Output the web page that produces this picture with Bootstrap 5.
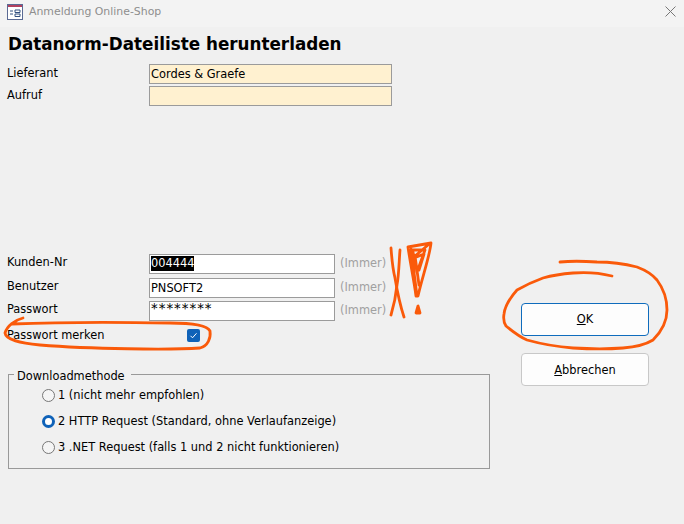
<!DOCTYPE html>
<html lang="de">
<head>
<meta charset="utf-8">
<title>Anmeldung Online-Shop</title>
<link href="https://cdn.jsdelivr.net/npm/bootstrap@5.3.0/dist/css/bootstrap.min.css" rel="stylesheet">
<style>
html,body{height:524px;overflow:hidden}
body{background:#f0f0f0;color:#000;font-family:"DejaVu Sans","Noto Sans",sans-serif;font-size:11.4px;line-height:16px}
.win-shell{position:relative;width:684px;height:524px}
.win-title{height:27px;padding:0 0 3px 7px;background:#f3f3f3;color:#8e8e8e;gap:6px;font-size:10.9px}
.win-close{margin-left:auto;margin-right:8px;margin-top:-2px}
.dlg-head{font-size:16.8px;font-weight:700;line-height:22px;padding:6px 0 0 8px;margin:0;height:37px}
.dlg-main{padding-left:7px}
.left-pane{width:483px}
.fld-row{height:20px;margin-bottom:2px}
.fld-row.gap4{margin-bottom:4px}
.fld-row.gap3{margin-bottom:3px}
.fld-label{width:142px;flex:none;margin-top:1px}
.fld-label.lower{margin-top:0}
.fld-input{height:20px;border:1px solid #9b9b9b;border-radius:0;padding:0 1px;font:inherit;color:#000;outline:0;background:#fff;min-height:0;box-shadow:none}
.fld-wide{width:243px;background:#fff1d0}
.fld-narrow{width:186px}
.fld-hint{color:#a0a0a0;margin-left:5px;line-height:19px}
.sel-text{background:#000;color:#fff;display:inline-block;line-height:15px}
.pw-dots{font-size:13.4px;letter-spacing:1px;line-height:14px;overflow:hidden}
.spacer-a{height:146px}
.check-row{height:20px;margin-top:4px}
.check-label{width:180px;flex:none}
.check-box{width:13px;height:13px;border-radius:2px;background:#0f62b8}
.group-frame{margin:29px 0 0 1px;width:482px;height:95px;border:1px solid #999;position:relative;padding:7px 0 0 33px}
.group-legend{position:absolute;left:5px;top:-7px;background:#f0f0f0;padding:0 6px 0 3px}
.radio-line{height:26px;gap:3px}
.radio-mark{appearance:none;width:13px;height:13px;border:1px solid #777;border-radius:50%;background:#f5f5f5;margin:0;flex:none}
.radio-mark:checked{border:3.5px solid #0f62b8;background:#fff}
.right-pane{width:128px;margin-left:31px;padding-top:239px}
.dlg-btn{width:128px;height:33px;background:#fdfdfd;border:1px solid #c8c8c8;border-radius:4px;color:#000;font-size:11.4px;padding:0;display:block;margin-bottom:17px}
.dlg-btn.is-default{border-color:#0f6cbd;padding-bottom:2px}
.scribble{position:absolute;left:0;top:0;pointer-events:none}
.scribble path{fill:none;stroke:#fa5a0a;stroke-linecap:round;stroke-linejoin:round;stroke-width:2.8}
</style>
</head>
<body>
<div class="win-shell">
  <div class="win-title d-flex align-items-center">
    <svg width="16" height="16" viewBox="0 0 16 16"><rect x=".5" y=".5" width="15" height="15" fill="#fff" stroke="#5a6a94"/><rect x="1" y="1" width="14" height="2" fill="#b2415f"/><path d="M3 7h3M3 10h3M8 6h5v2.500H8zM8 10h5v2.500H8z" fill="none" stroke="#33507f"/></svg>
    <span>Anmeldung Online-Shop</span>
    <svg class="win-close" width="11" height="11" viewBox="0 0 11 11"><path d="M.5.5l10 10M10.500.5l-10 10" stroke="#777" fill="none"/></svg>
  </div>
  <h1 class="dlg-head">Datanorm-Dateiliste herunterladen</h1>
  <div class="dlg-main d-flex">
    <div class="left-pane">
      <div class="fld-row d-flex"><div class="fld-label">Lieferant</div><input class="fld-input fld-wide" value="Cordes &amp; Graefe"></div>
      <div class="fld-row d-flex"><div class="fld-label">Aufruf</div><input class="fld-input fld-wide" value=""></div>
      <div class="spacer-a"></div>
      <div class="fld-row gap4 d-flex"><div class="fld-label lower">Kunden-Nr</div><div class="fld-input fld-narrow"><span class="sel-text">004444</span></div><span class="fld-hint">(Immer)</span></div>
      <div class="fld-row gap3 d-flex"><div class="fld-label lower">Benutzer</div><input class="fld-input fld-narrow" value="PNSOFT2"><span class="fld-hint">(Immer)</span></div>
      <div class="fld-row d-flex"><div class="fld-label lower">Passwort</div><div class="fld-input fld-narrow pw-dots">********</div><span class="fld-hint">(Immer)</span></div>
      <div class="check-row d-flex align-items-center">
        <span class="check-label">Passwort merken</span>
        <span class="check-box d-flex align-items-center justify-content-center"><svg width="9" height="9" viewBox="0 0 9 9"><path d="M1.500 4.800l2 2 4-4.500" fill="none" stroke="#fff"/></svg></span>
      </div>
      <div class="group-frame">
        <span class="group-legend">Downloadmethode</span>
        <label class="radio-line d-flex align-items-center"><input type="radio" name="dl" class="radio-mark"><span>1 (nicht mehr empfohlen)</span></label>
        <label class="radio-line d-flex align-items-center"><input type="radio" name="dl" class="radio-mark" checked><span>2 HTTP Request (Standard, ohne Verlaufanzeige)</span></label>
        <label class="radio-line d-flex align-items-center"><input type="radio" name="dl" class="radio-mark"><span>3 .NET Request (falls 1 und 2 nicht funktionieren)</span></label>
      </div>
    </div>
    <div class="right-pane">
      <button class="dlg-btn is-default" type="button"><u>O</u>K</button>
      <button class="dlg-btn" type="button"><u>A</u>bbrechen</button>
    </div>
  </div>
  <svg class="scribble" width="684" height="524" viewBox="0 0 684 524">
    <path d="M23 318C15 320 7 326 5 333C6 340 20 343 40 345C90 349 170 350 200 348C208 346 211 338 210 331C207 325 190 323 170 323C120 322 60 322 12 324"/>
    <path d="M612 276C600 273 585 272 573 273C560 274 550 276 543 278C532 282 524 286 517 290C510 298 505 305 504 314C503 320 504 323 506 326C512 331 520 337 527 340C545 345 560 347 573 348C590 349 610 349 623 348C635 347 645 345 653 340C661 332 667 322 667 310C667 298 663 288 657 280C652 274 645 270 637 267C625 264 610 262 597 262C582 261 570 261 560 262"/>
    <path d="M391 248C392 262 393 270 395 278C397 290 400 305 404 317"/>
    <path d="M400 250C399 262 399 274 397 285C396 295 394 305 391 315"/>
    <path d="M408 247L431 243C430 255 422 278 418 296L416 296C414 280 410 262 408 247M411 249L417 296M428 245L415 256L419 285M412 250L425 250L417 272L413 252M414 258L424 254L419 270"/>
    <path d="M418 306L416 313L420 313Z"/>
  </svg>
</div>
<script src="https://cdn.jsdelivr.net/npm/bootstrap@5.3.0/dist/js/bootstrap.bundle.min.js"></script>
</body>
</html>
